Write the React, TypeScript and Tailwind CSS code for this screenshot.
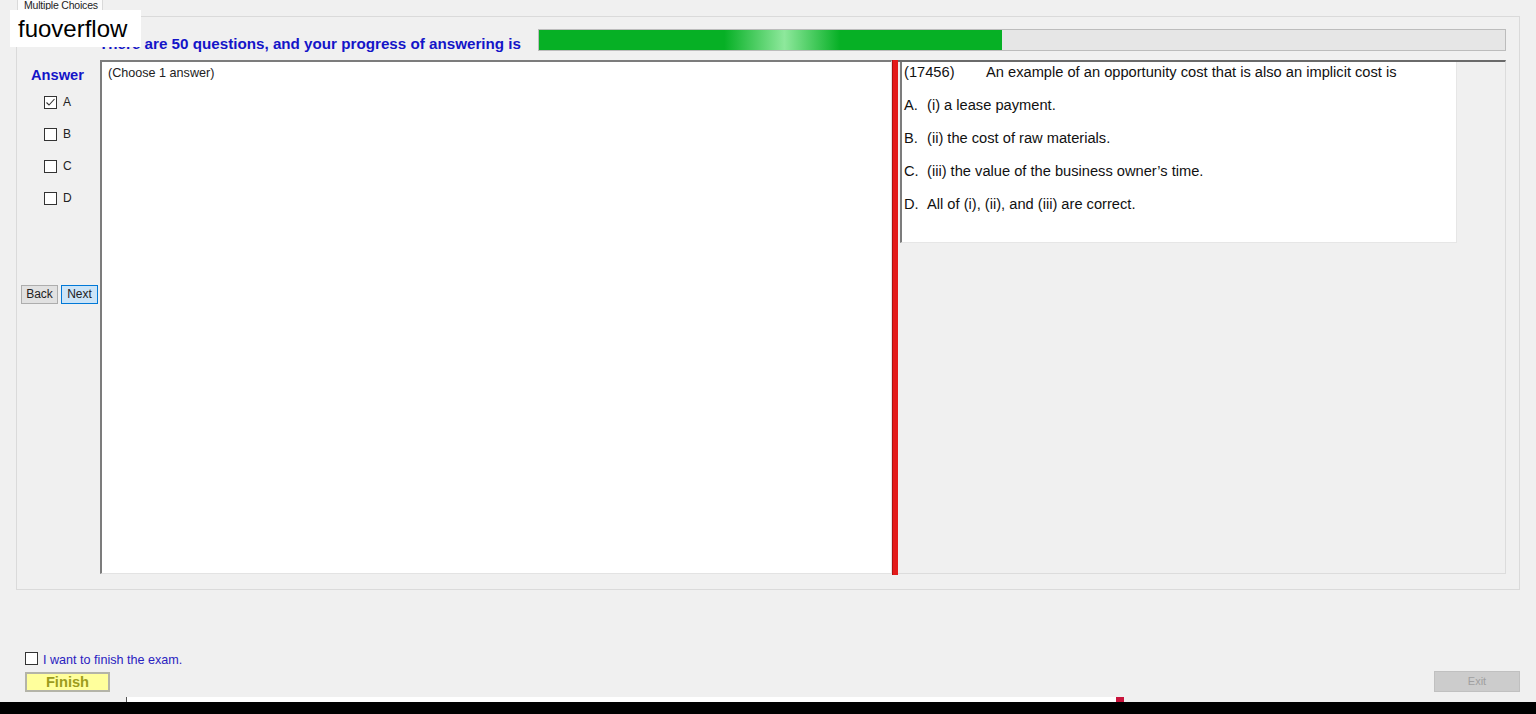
import React from "react";

function Box({ checked = false }: { checked?: boolean }) {
  return (
    <span className="w-[13px] h-[13px] border border-[#333333] bg-white flex items-center justify-center shrink-0">
      {checked && (
        <svg width="11" height="11" viewBox="0 0 11 11">
          <polyline points="1.5,5.5 4,8 9.5,2" fill="none" stroke="#333333" strokeWidth="1.1" />
        </svg>
      )}
    </span>
  );
}

const answers = [
  ["A.", "(i) a lease payment."],
  ["B.", "(ii) the cost of raw materials."],
  ["C.", "(iii) the value of the business owner\u2019s time."],
  ["D.", "All of (i), (ii), and (iii) are correct."],
];

export default function App() {
  return (
    <div className="w-[1536px] h-[714px] bg-[#f0f0f0] relative overflow-hidden font-['Liberation_Sans',Arial,sans-serif] text-black">
      {/* tab header */}
      <div className="h-[16px] pl-[17px] flex">
        <div className="h-[16px] w-[86px] bg-[#fbfbfb] border-x border-[#d9d9d9] text-[10.5px] leading-[11px] pl-[6px] overflow-hidden text-[#222222] whitespace-nowrap tracking-[-0.2px]">
          Multiple Choices
        </div>
      </div>

      {/* tab panel */}
      <div className="ml-[16px] w-[1504px] h-[574px] border border-[#dadada] flex flex-col">
        {/* header */}
        <div className="h-[43px] flex items-start pl-[82px]">
          <div className="w-[439px] mt-[18px] text-[15.2px] font-bold leading-[17px] text-[#1414c8] whitespace-nowrap">
            There are 50 questions, and your progress of answering is
          </div>
          <div className="mt-[12px] w-[968px] h-[22px] border border-[#bcbcbc] bg-[#e6e6e6]">
            <div className="w-[463px] h-full bg-[linear-gradient(90deg,#06b025_0%,#06b025_40%,#8ee89c_53%,#06b025_65%,#06b025_100%)]" />
          </div>
        </div>

        {/* main row */}
        <div className="h-[514px] flex">
          {/* left column */}
          <div className="w-[83px] flex flex-col">
            <div className="mt-[7px] ml-[14px] text-[14.67px] font-bold leading-[16px] text-[#1414c8]">Answer</div>
            <div className="mt-[13px] flex flex-col gap-[19px]">
              {["A", "B", "C", "D"].map((l, i) => (
                <div key={l} className="h-[13px] flex items-center ml-[27px]">
                  <Box checked={i === 0} />
                  <span className="ml-[6px] text-[12px] leading-[13px] text-[#222222]">{l}</span>
                </div>
              ))}
            </div>
            <div className="mt-[80px] flex ml-[4px] gap-[3px]">
              <div className="w-[37px] h-[19px] bg-[#e1e1e1] border border-[#adadad] text-[12px] leading-[17px] text-center text-[#222222]">
                Back
              </div>
              <div className="w-[37px] h-[19px] bg-[#cce4f7] border border-[#0078d7] text-[12px] leading-[17px] text-center text-[#222222]">
                Next
              </div>
            </div>
          </div>

          {/* left text box */}
          <div className="w-[792px] h-[514px] bg-white border-t-2 border-l-2 border-t-[#7c7c7c] border-l-[#7c7c7c] border-r border-b border-r-[#e3e3e3] border-b-[#e3e3e3] pl-[6px] pt-[4px]">
            <div className="text-[12.6px] leading-[14px] text-[#222222]">(Choose 1 answer)</div>
          </div>

          {/* splitter */}
          <div className="w-[6px] h-[515px] bg-[#e31b1b] border-l border-[#b01010]" />

          {/* right pane */}
          <div className="w-[608px] h-[514px] border-t-2 border-t-[#6a6a6a] border-r border-b border-r-[#dcdcdc] border-b-[#dcdcdc] bg-[#f0f0f0]">
            <div className="ml-[2px] w-[557px] h-[181px] bg-white border-l-2 border-l-[#7c7c7c] border-r border-b border-r-[#e6e6e6] border-b-[#e6e6e6] pl-[2px] text-[14.67px] text-[#111111]">
              <div className="h-[20px] leading-[20px] flex mt-0">
                <span className="w-[82px]">(17456)</span>
                <span>An example of an opportunity cost that is also an implicit cost is</span>
              </div>
              {answers.map(([l, t]) => (
                <div key={l} className="h-[20px] leading-[20px] flex mt-[13px]">
                  <span className="w-[23px]">{l}</span>
                  <span>{t}</span>
                </div>
              ))}
            </div>
          </div>
          <div className="w-[12px]" />
        </div>
      </div>

      {/* bottom controls */}
      <div className="mt-[62px] h-[40px] flex justify-between items-end pl-[25px] pr-[16px]">
        <div className="flex flex-col">
          <div className="h-[13px] flex items-center">
            <Box />
            <span className="ml-[5px] mt-[3px] text-[12.6px] leading-[13px] text-[#2a22c0]">I want to finish the exam.</span>
          </div>
          <div className="mt-[7px] w-[85px] h-[20px] bg-[#ffff9c] border-2 border-[#b4b4a8] text-[14.67px] font-bold leading-[16px] text-center text-[#9c9c1c]">
            Finish
          </div>
        </div>
        <div className="w-[86px] h-[21px] bg-[#cccccc] border border-[#c0c0c0] text-[11px] leading-[19px] text-center text-[#a0a0a0]">
          Exit
        </div>
      </div>

      {/* taskbar strip */}
      <div className="mt-[5px] h-[5px] flex">
        <div className="w-[126px] bg-[#f0f0f0]" />
        <div className="w-[1px] bg-[#555555]" />
        <div className="w-[989px] bg-white" />
        <div className="w-[8px] bg-[#c8143c]" />
        <div className="flex-1 bg-[#f0f0f0]" />
      </div>
      <div className="h-[12px] bg-black" />

      {/* watermark overlay */}
      <div className="absolute left-[10px] top-[10px] w-[131px] h-[37px] bg-white pl-[8px] text-[24px] leading-[37px] text-black">
        fuoverflow
      </div>
    </div>
  );
}
